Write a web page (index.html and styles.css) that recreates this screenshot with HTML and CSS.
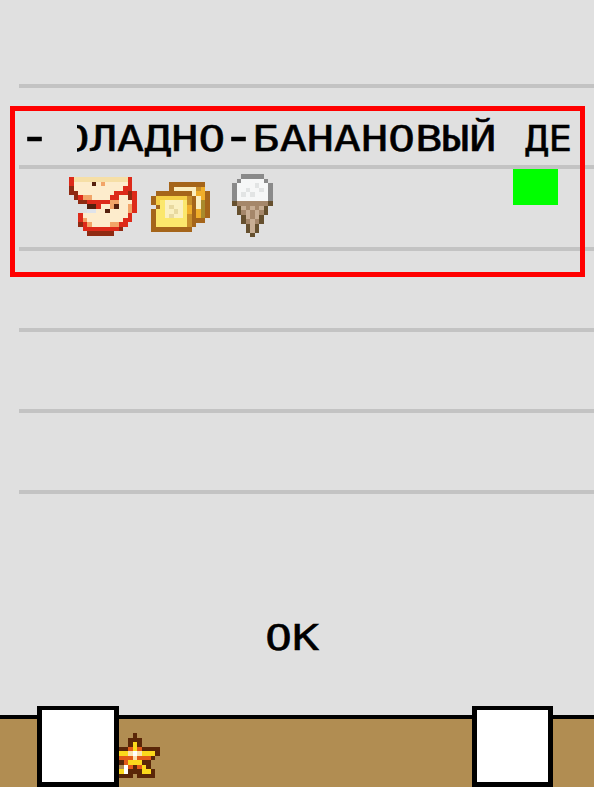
FILE: index.html
```html
<!DOCTYPE html>
<html lang="ru">
<head>
<meta charset="utf-8">
<title>Меню</title>
<link rel="stylesheet" href="styles.css">
</head>
<body>
<main class="screen">
  <section class="list">
    <div class="row"></div>
    <div class="row row-text">
      <div class="label">
        <span class="dash"><span class="glyphs"><span class="hyphen">-</span></span></span>
        <span class="cut"><span class="glyphs">О</span></span>
        <span class="name"><span class="glyphs">ЛАДНО<span class="hyphen">-</span>БАНАНОВЫЙ</span></span>
        <span class="tail"><span class="glyphs">ДЕ</span></span>
      </div>
    </div>
    <div class="row row-icons">
      <svg class="sprite apple" viewBox="0 0 15 13" shape-rendering="crispEdges" fill="none" stroke-width="1">
        <path stroke="#fdeccc" d="M1 1.5h4M6 1.5h1M8 1.5h5M1 2.5h11M2 3.5h8M5 4.5h4M11 4.5h2M11 5.5h3M7 6.5h3M11 6.5h2M6 7.5h2M9 7.5h4M3 8.5h10M4 9.5h8M5 10.5h4"/>
        <path stroke="#f6dfa6" d="M1 .5h12"/>
        <path stroke="#dd2a1a" d="M0 .5h1M13 .5h1M0 1.5h1M13 1.5h1M12 2.5h2M10 3.5h3M14 3.5h1M2 4.5h1M9 4.5h2M14 4.5h1M4 5.5h5M14 5.5h1M6 6.5h1M14 6.5h1M14 7.5h1M2 8.5h1M13 8.5h1M2 9.5h1M12 9.5h2M3 10.5h1M11 10.5h2M3 11.5h8"/>
        <path stroke="#8f2a12" d="M0 2.5h1M0 3.5h2M13 3.5h1M1 4.5h1M13 4.5h1M2 5.5h2M2 10.5h1M11 11.5h1M4 12.5h6"/>
        <path stroke="#f2a468" d="M7 1.5h1M3 4.5h2M9 5.5h2M9 6.5h1M13 6.5h1M13 7.5h1M3 9.5h1M4 10.5h1M9 10.5h2"/>
        <path stroke="#55200e" d="M5 1.5h1M4 6.5h2M10 6.5h1M8 7.5h1"/>
        <path stroke="#dfe3ea" d="M4 7.5h2"/>
      </svg>
      <svg class="sprite bread" viewBox="0 0 13 11" shape-rendering="crispEdges" fill="none" stroke-width="1">
        <path stroke="#a5651a" d="M4 .5h8M4 1.5h1M1 2.5h8M0 3.5h1M0 4.5h1M1 5.5h1M0 6.5h1M0 7.5h1M0 8.5h1M0 9.5h1M0 10.5h9M9 3.5h1M12 2.5h1M12 3.5h1M9 4.5h1M12 4.5h1M9 5.5h1M12 5.5h1M9 6.5h1M12 6.5h1M9 7.5h1M12 7.5h1M9 8.5h3M9 9.5h1"/>
        <path stroke="#fbeec0" d="M5 1.5h5M9 2.5h1M10 3.5h1M10 4.5h1M10 5.5h1"/>
        <path stroke="#fbe76c" d="M2 4.5h1M2 5.5h1M1 6.5h2M1 7.5h2M1 8.5h7M1 9.5h7M7 4.5h1M7 5.5h1M7 6.5h1M7 7.5h1"/>
        <path stroke="#f5cf45" d="M1 3.5h7M1 4.5h1"/>
        <path stroke="#fbf0c0" d="M3 4.5h4M3 5.5h4M3 6.5h4M3 7.5h4"/>
        <path stroke="#e8d9a0" d="M4 5.5h1M5 6.5h1M4 7.5h1"/>
        <path stroke="#c88e2a" d="M10 1.5h1M8 3.5h1M8 4.5h1M8 7.5h1M8 8.5h1M8 9.5h1"/>
        <path stroke="#f0ae2a" d="M11 1.5h1M10 2.5h2M11 3.5h1M8 5.5h1M8 6.5h1M10 6.5h1M10 7.5h1"/>
        <path stroke="#a98a2c" d="M11 4.5h1M11 5.5h1M11 6.5h1M11 7.5h1"/>
      </svg>
      <svg class="sprite cone" viewBox="0 0 9 14" shape-rendering="crispEdges" fill="none" stroke-width="1">
        <path stroke="#8a8a8a" d="M2 .5h5M1 1.5h1M7 1.5h1M0 2.5h1M8 2.5h1M0 3.5h1M8 3.5h1M0 4.5h1M8 4.5h1M0 5.5h1M8 5.5h1"/>
        <path stroke="#f6f7f7" d="M2 1.5h5M1 2.5h7M1 3.5h7M1 4.5h7M1 5.5h7"/>
        <path stroke="#e2e4e4" d="M3 3.5h1M6 3.5h1M4 4.5h1M5 2.5h1M2 4.5h1"/>
        <path stroke="#66502f" d="M0 6.5h1M8 6.5h1M1 7.5h1M7 7.5h1M1 8.5h1M7 8.5h1M2 9.5h1M6 9.5h1M2 10.5h1M6 10.5h1M3 11.5h1M5 11.5h1M3 12.5h1M5 12.5h1M4 13.5h1"/>
        <path stroke="#a5876a" d="M1 6.5h7M3 7.5h1M5 7.5h1M2 8.5h1M4 8.5h1M6 8.5h1M4 9.5h1M3 10.5h1M5 10.5h1"/>
        <path stroke="#c8ae94" d="M2 7.5h1M4 7.5h1M6 7.5h1M3 8.5h1M5 8.5h1M3 9.5h1M5 9.5h1M4 10.5h1M4 11.5h1M4 12.5h1"/>
      </svg>
    </div>
    <div class="row"></div>
    <div class="row"></div>
    <div class="row"></div>
  </section>
  <div class="ok"><span class="glyphs">ОК</span></div>
  <footer class="bar"></footer>
  <div class="selection"></div>
  <div class="marker"></div>
  <svg class="star" viewBox="-2 0 11 10" shape-rendering="crispEdges" fill="none" stroke-width="1">
    <path stroke="#5a2608" d="M3 .5h1M2 1.5h3M2 2.5h1M4 2.5h1M-2 3.5h4M5 3.5h4M8 4.5h1M7 5.5h1M0 6.5h1M5 6.5h2M6 7.5h1M3 7.5h1M2 8.5h3M7 8.5h1M0 9.5h3M4 9.5h4"/>
    <path stroke="#fbd81c" d="M3 2.5h1M3 3.5h1M-2 4.5h4M5 4.5h3M2 6.5h3M5 7.5h1M0 8.5h1M5 8.5h2"/>
    <path stroke="#e25a18" d="M2 3.5h1M4 3.5h1M-2 5.5h5M4 5.5h3M2 7.5h1M4 7.5h1M1 6.5h1"/>
    <path stroke="#fbe3b0" d="M2 4.5h1M4 4.5h1M3 5.5h1"/>
    <path stroke="#fff" d="M3 4.5h1M1 7.5h1M1 8.5h1"/>
  </svg>
  <div class="softkey softkey-left"></div>
  <div class="softkey softkey-right"></div>
</main>
</body>
</html>
```

FILE: styles.css
```css
* { box-sizing: border-box; }
html, body { margin: 0; height: 100%; }
body { background: #e0e0e0; overflow: hidden; }

.screen {
  position: relative;
  width: 594px;
  height: 787px;
  display: flex;
  flex-direction: column;
  background: #e0e0e0;
  overflow: hidden;
  font-family: "DejaVu Sans Mono", monospace;
  color: #000;
}

.list {
  margin: 6.7px 0 0 19px;
  display: flex;
  flex-direction: column;
}
.row {
  height: 81.3px;
  border-bottom: 4px solid #c3c3c3;
  flex: none;
}
.row-text { display: flex; align-items: flex-end; }
.row-icons { position: relative; }

.label {
  width: 549px;
  height: 44px;
  margin-bottom: 4px;
  display: flex;
  font-size: 36px;
  line-height: 44px;
  -webkit-text-stroke: 0.5px #000;
  white-space: nowrap;
}
.label > span { display: flex; flex: none; }
.glyphs { display: block; flex: none; transform: scaleX(1.25); transform-origin: left center; }
.hyphen { display: inline-block; transform: translateY(-3px) scale(1.2, 1.4); }

.dash { width: 27px; margin: 0 29px 0 2px; }
.cut { width: 13px; overflow: hidden; justify-content: flex-end; }
.cut .glyphs { transform-origin: right center; }
.name { width: 405px; margin-right: 30px; }
.tail { width: 43px; }
.tail .glyphs { transform: scaleX(1.08); }

.sprite { display: block; position: absolute; }
.apple { left: 50px; top: 8px; width: 68px; height: 59px; }
.bread { left: 132px; top: 13px; width: 59px; height: 50px; }
.cone { left: 213px; top: 5px; width: 41px; height: 63px; }

.ok {
  margin: 122px 0 0 265px;
  width: 54px;
  font-size: 36px;
  line-height: 44px;
  -webkit-text-stroke: 0.5px #000;
  white-space: nowrap;
}

.bar {
  margin-top: auto;
  height: 72px;
  background: #b18d52;
  border-top: 4px solid #000;
}

.selection {
  position: absolute;
  left: 10px;
  top: 106px;
  width: 575px;
  height: 171px;
  border: 5px solid #f00;
}
.marker {
  position: absolute;
  left: 513px;
  top: 169px;
  width: 45px;
  height: 36px;
  background: #0f0;
}
.star {
  position: absolute;
  left: 110px;
  top: 733px;
  width: 50px;
  height: 45px;
}
.softkey {
  position: absolute;
  top: 706px;
  width: 82px;
  height: 81px;
  background: #fff;
  border: solid #000;
  border-width: 4px 5px 5px;
}
.softkey-left { left: 37px; }
.softkey-right { left: 472px; width: 81px; }
```
